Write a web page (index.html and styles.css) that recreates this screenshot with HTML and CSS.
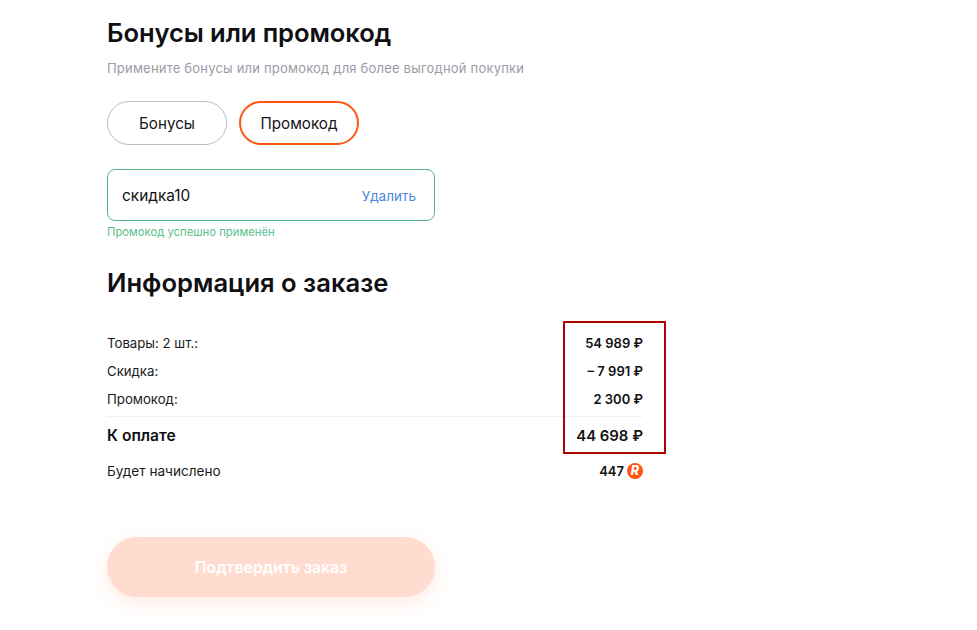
FILE: index.html
```html
<!DOCTYPE html>
<html lang="ru">
<head>
<meta charset="utf-8">
<title>Бонусы или промокод</title>
<link rel="stylesheet" href="styles.css">
</head>
<body>
<main class="page">
  <h2 class="title title-bonus">Бонусы или промокод</h2>
  <p class="subtitle">Примените бонусы или промокод для более выгодной покупки</p>
  <div class="tabs">
    <button class="tab">Бонусы</button>
    <button class="tab tab-active">Промокод</button>
  </div>
  <div class="promo">
    <span class="promo-code">скидка10</span>
    <span class="promo-remove">Удалить</span>
  </div>
  <p class="promo-ok">Промокод успешно применён</p>
  <h2 class="title title-info">Информация о заказе</h2>
  <div class="summary">
    <div class="row"><span>Товары: 2 шт.:</span><b class="val">54 989 ₽</b></div>
    <div class="row"><span>Скидка:</span><b class="val">– 7 991 ₽</b></div>
    <div class="row"><span>Промокод:</span><b class="val">2 300 ₽</b></div>
    <div class="row row-total"><span>К оплате</span><b class="val">44 698 ₽</b></div>
    <div class="row row-bonus"><span>Будет начислено</span><b class="val val-bonus">447 <i class="coin">R</i></b></div>
    <div class="highlight"></div>
  </div>
  <button class="confirm">Подтвердить заказ</button>
</main>
</body>
</html>
```

FILE: styles.css
```css
* { box-sizing: border-box; }
html, body { margin: 0; background: #fff; }
body { font-family: Inter, "Noto Sans", sans-serif; color: #111; overflow: hidden; height: 630px; }
.page { width: 536px; margin-left: 107px; padding-top: 17px; }
.title { margin: 0; font-size: 25.6px; line-height: 32px; font-weight: 600; color: #0f0f14; }
.title-bonus { letter-spacing: -.1px; }
.subtitle { margin: 10px 0 0; font-size: 13px; line-height: 18px; letter-spacing: .2px; color: #9d9aa6; }
.tabs { display: flex; gap: 12px; margin-top: 24px; }
.tab { width: 120px; height: 44px; border-radius: 22px; border: 1px solid #bdbbc7; background: #fff; font: 400 15.2px Inter, sans-serif; color: #15151a; padding: 0; }
.tab-active { border: 2px solid #ff5412; }
.promo { display: flex; align-items: center; justify-content: space-between; width: 328px; height: 52px; margin-top: 24px; padding: 1px 18px 0 14px; border: 1px solid #54b883; border-radius: 8px; }
.promo-code { font-size: 15.4px; color: #111; }
.promo-remove { font-size: 13.5px; color: #4a86e0; }
.promo-ok { margin: 4px 0 0; font-size: 11.3px; line-height: 14px; color: #5cc08e; }
.title-info { margin-top: 28px; }
.summary { position: relative; margin-top: 30px; }
.row { display: flex; justify-content: space-between; align-items: center; height: 28px; font-size: 13.2px; color: #1a1a20; }
.val { font-weight: 600; font-size: 13px; color: #111; }
.row-total { height: 38px; margin-top: 3px; border-top: 1px solid #f2f2f6; font-size: 15.6px; font-weight: 600; color: #0f0f14; }
.row-total .val { font-size: 14.9px; }
.row-bonus { height: 32px; margin-top: 1px; font-size: 13.6px; }
.val-bonus { display: flex; align-items: center; gap: 3px; }
.coin { display: flex; align-items: center; justify-content: center; width: 16px; height: 16px; border-radius: 50%; background: #ff5412; color: #fff; font: italic 800 12.5px/1 Inter, sans-serif; }
.highlight { position: absolute; left: 456px; top: -8px; width: 103px; height: 133px; border: 2px solid #b00000; pointer-events: none; }
.confirm { display: block; width: 328px; height: 60px; margin-top: 50px; border: 0; border-radius: 30px; background: #ffdccf; color: #fff; font: 600 15.8px Inter, sans-serif; box-shadow: 0 6px 18px rgba(255, 120, 70, .15); }
```
